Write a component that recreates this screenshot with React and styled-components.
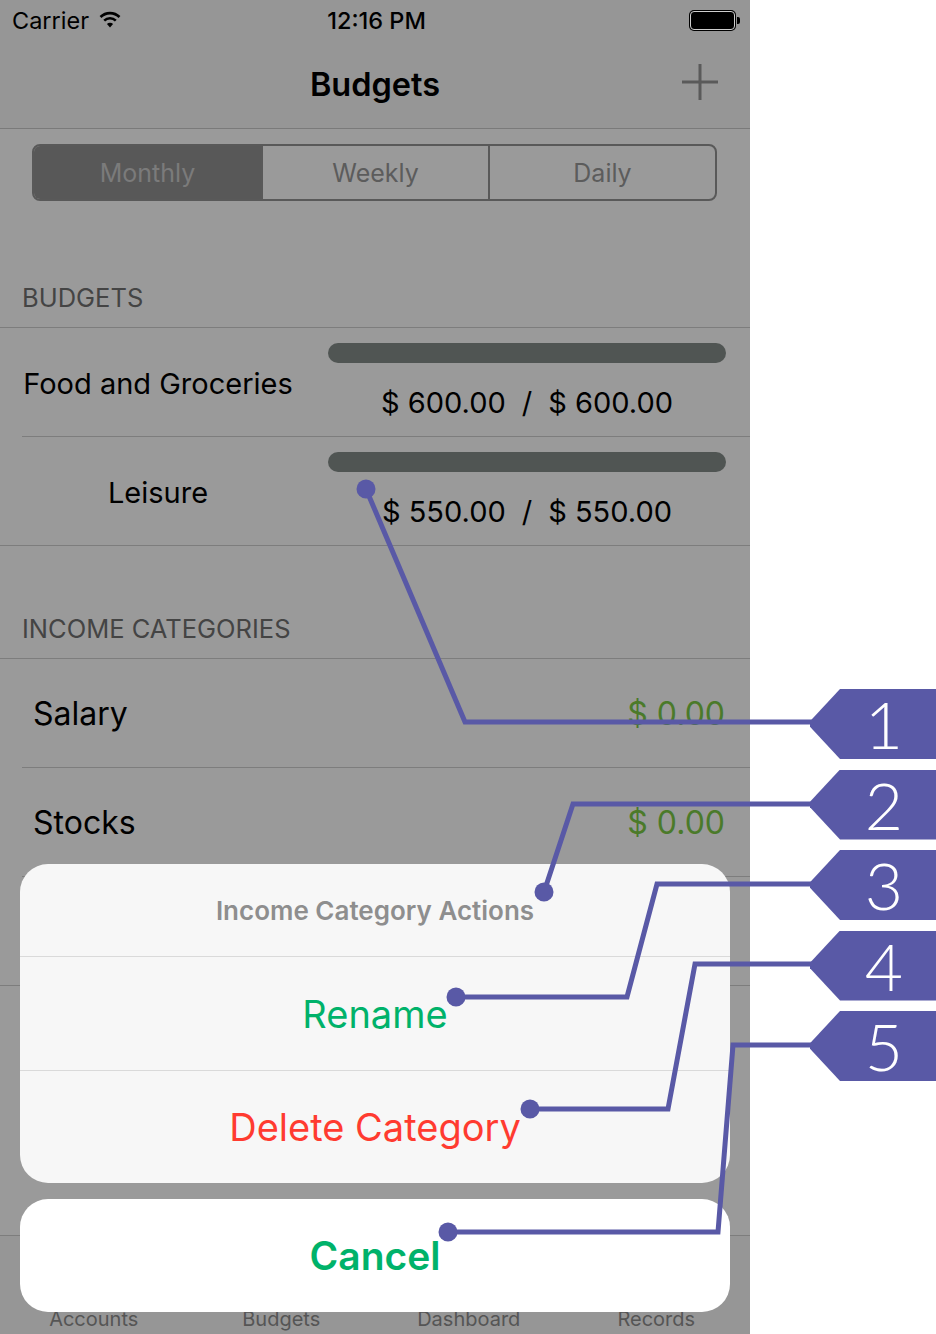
import React from 'react';
import styled, { createGlobalStyle } from 'styled-components';

const GlobalStyle = createGlobalStyle`
  html, body {
    margin: 0;
    padding: 0;
    background: #ffffff;
  }
  body {
    font-family: Inter, Roboto, "Liberation Sans", sans-serif;
  }
`;

const INK = '#5959a6'; // annotation colour

const segments = ['Monthly', 'Weekly', 'Daily'];

const budgets = [
  { name: 'Food and Groceries', spent: '$ 600.00', limit: '$ 600.00' },
  { name: 'Leisure', spent: '$ 550.00', limit: '$ 550.00' },
];

const incomes = [
  { name: 'Salary', amount: '$ 0.00' },
  { name: 'Stocks', amount: '$ 0.00' },
  { name: '', amount: '' },
];

const tabs = ['Accounts', 'Budgets', 'Dashboard', 'Records'];

// leader lines: dot -> bends -> tag tip
const leaders = [
  { dot: [366, 489], pts: [[366, 489], [465, 722], [814, 722]] },
  { dot: [544, 892], pts: [[544, 892], [573, 804], [814, 804]] },
  { dot: [456, 997], pts: [[456, 997], [627, 997], [657, 884], [814, 884]] },
  { dot: [530, 1109], pts: [[530, 1109], [668, 1109], [695, 964], [814, 964]] },
  { dot: [448, 1232], pts: [[448, 1232], [718, 1232], [733, 1045], [814, 1045]] },
];

export default function App() {
  return (
    <>
      <GlobalStyle />
      <Page>
        <Phone>
          <StatusBar>
            <Carrier>
              Carrier
              <svg width="24" height="18" viewBox="0 0 24 18">
                <path d="M2.5 7 A13.5 13.5 0 0 1 21.5 7" stroke="#000" strokeWidth="2.6" fill="none" />
                <path d="M6.2 10.6 A8.4 8.4 0 0 1 17.8 10.6" stroke="#000" strokeWidth="2.6" fill="none" />
                <path d="M12 17.5 L8.9 14 A4.4 4.4 0 0 1 15.1 14 Z" fill="#000" />
              </svg>
            </Carrier>
            <Clock>12:16 PM</Clock>
            <Battery><BatteryTip /></Battery>
          </StatusBar>

          <NavBar>
            <Title>Budgets</Title>
            <PlusButton aria-label="add">
              <svg width="36" height="36" viewBox="0 0 36 36">
                <path d="M18 0 V36 M0 18 H36" stroke="#5a5a5a" strokeWidth="3" />
              </svg>
            </PlusButton>
          </NavBar>

          <SegmentWrap>
            <Segmented>
              {segments.map((s, i) => (
                <Segment key={s} $active={i === 0}>{s}</Segment>
              ))}
            </Segmented>
          </SegmentWrap>

          <SectionHeader $height={126}>BUDGETS</SectionHeader>
          <Divider />
          {budgets.map((b, i) => (
            <React.Fragment key={b.name}>
              <BudgetRow>
                <BudgetName>{b.name}</BudgetName>
                <BudgetRight>
                  <Progress />
                  <Amounts>
                    <span>{b.spent}</span>
                    <span>/</span>
                    <span>{b.limit}</span>
                  </Amounts>
                </BudgetRight>
              </BudgetRow>
              <Divider $inset={i < budgets.length - 1} />
            </React.Fragment>
          ))}

          <SectionHeader $height={112}>INCOME CATEGORIES</SectionHeader>
          <Divider />
          {incomes.map((c, i) => (
            <React.Fragment key={i}>
              <IncomeRow>
                <IncomeName>{c.name}</IncomeName>
                <IncomeAmount>{c.amount}</IncomeAmount>
              </IncomeRow>
              <Divider $inset={i < incomes.length - 1} />
            </React.Fragment>
          ))}

          <TabBar>
            {tabs.map(t => (
              <TabLabel key={t}>{t}</TabLabel>
            ))}
          </TabBar>

          <Sheet>
            <SheetGroup>
              <SheetTitle>Income Category Actions</SheetTitle>
              <SheetAction $color="#00b26a" $h={114}>Rename</SheetAction>
              <SheetAction $color="#ff3b30" $h={112} $last>Delete Category</SheetAction>
            </SheetGroup>
            <CancelButton>Cancel</CancelButton>
          </Sheet>
        </Phone>

        <Callouts>
          {leaders.map((_, i) => (
            <Tag key={i}>{i + 1}</Tag>
          ))}
        </Callouts>

        <Leaders width="936" height="1334" viewBox="0 0 936 1334">
          {leaders.map((l, i) => (
            <g key={i}>
              <polyline
                points={l.pts.map(p => p.join(',')).join(' ')}
                fill="none"
                stroke={INK}
                strokeWidth="5"
                strokeLinejoin="miter"
              />
              <circle cx={l.dot[0]} cy={l.dot[1]} r="9.5" fill={INK} />
            </g>
          ))}
        </Leaders>
      </Page>
    </>
  );
}

const Page = styled.div`
  position: relative;
  display: flex;
  width: 936px;
  height: 1334px;
  overflow: hidden;
  background: #ffffff;
`;

const Phone = styled.div`
  position: relative;
  display: flex;
  flex-direction: column;
  width: 750px;
  height: 1334px;
  background: #9a9a9a;
  color: #000;
`;

const StatusBar = styled.div`
  display: grid;
  grid-template-columns: 1fr auto 1fr;
  align-items: center;
  height: 40px;
  padding: 0 11px 0 12px;
  background: #969696;
`;

const Carrier = styled.div`
  display: flex;
  align-items: center;
  gap: 9px;
  font-size: 23.5px;
  svg { margin-top: -2px; }
`;

const Clock = styled.div`
  font-size: 23.5px;
  font-weight: 500;
  padding-left: 2px;
`;

const Battery = styled.div`
  justify-self: end;
  position: relative;
  width: 43px;
  height: 17px;
  margin-right: 4px;
  background: #000;
  border: 1px solid #cfcfcf;
  border-radius: 4px;
  box-shadow: 0 0 0 1px #000;
`;

const BatteryTip = styled.span`
  position: absolute;
  right: -6px;
  top: 5px;
  width: 3px;
  height: 7px;
  background: #000;
  border-radius: 0 2px 2px 0;
`;

const NavBar = styled.div`
  display: flex;
  align-items: center;
  justify-content: center;
  position: relative;
  height: 88px;
  background: #969696;
  border-bottom: 1px solid #7a7a7a;
`;

const Title = styled.h1`
  margin: 0;
  font-size: 32.5px;
  font-weight: 600;
`;

const PlusButton = styled.div`
  position: absolute;
  right: 32px;
  top: 24px;
  width: 36px;
  height: 36px;
`;

const SegmentWrap = styled.div`
  padding: 15px 33px 0 32px;
`;

const Segmented = styled.div`
  display: grid;
  grid-template-columns: repeat(3, 1fr);
  height: 57px;
  box-sizing: border-box;
  border: 2px solid #595959;
  border-radius: 8px;
  overflow: hidden;
`;

const Segment = styled.div`
  display: flex;
  align-items: center;
  justify-content: center;
  font-size: 25px;
  color: ${p => (p.$active ? '#7b7b7b' : '#5c5c5c')};
  background: ${p => (p.$active ? '#585858' : 'transparent')};
  & + & { border-left: 2px solid #595959; }
`;

const SectionHeader = styled.div`
  display: flex;
  align-items: flex-end;
  height: ${p => p.$height}px;
  box-sizing: border-box;
  padding: 0 22px 15px;
  font-size: 25.5px;
  line-height: 28px;
  color: #444;
`;

const Divider = styled.div`
  height: 1px;
  margin-left: ${p => (p.$inset ? '22px' : '0')};
  background: #7d7d7d;
`;

const BudgetRow = styled.div`
  display: flex;
  height: 108px;
`;

const BudgetName = styled.div`
  display: flex;
  align-items: center;
  justify-content: center;
  width: 316px;
  padding-top: 2px;
  font-size: 29px;
`;

const BudgetRight = styled.div`
  display: flex;
  flex-direction: column;
  align-items: center;
  width: 398px;
  margin-left: 12px;
  padding-top: 15px;
`;

const Progress = styled.div`
  width: 100%;
  height: 20px;
  border-radius: 10px;
  background: #505553;
`;

const Amounts = styled.div`
  display: flex;
  gap: 16px;
  margin-top: 22px;
  font-size: 29px;
`;

const IncomeRow = styled.div`
  display: flex;
  align-items: center;
  justify-content: space-between;
  height: 108px;
  padding: 0 25px 0 33px;
`;

const IncomeName = styled.div`
  font-size: 32px;
`;

const IncomeAmount = styled.div`
  font-size: 32px;
  color: #4b7a2a;
`;

const TabBar = styled.div`
  display: grid;
  grid-template-columns: repeat(4, 1fr);
  align-items: end;
  margin-top: auto;
  height: 98px;
  border-top: 1px solid #7d7d7d;
  background: #969696;
`;

const TabLabel = styled.div`
  text-align: center;
  font-size: 20px;
  color: #555;
  padding-bottom: 3px;
`;

const Sheet = styled.div`
  position: absolute;
  left: 20px;
  right: 20px;
  top: 864px;
  display: flex;
  flex-direction: column;
  gap: 16px;
`;

const SheetGroup = styled.div`
  display: flex;
  flex-direction: column;
  border-radius: 28px;
  background: #f7f7f7;
  overflow: hidden;
`;

const SheetTitle = styled.div`
  display: flex;
  align-items: center;
  justify-content: center;
  height: 92px;
  border-bottom: 1px solid #dadada;
  font-size: 26px;
  font-weight: 600;
  color: #8e8e8e;
`;

const SheetAction = styled.div`
  display: flex;
  align-items: center;
  justify-content: center;
  height: ${p => p.$h}px;
  box-sizing: border-box;
  border-bottom: ${p => (p.$last ? 'none' : '1px solid #dadada')};
  font-size: 38px;
  color: ${p => p.$color};
`;

const CancelButton = styled.div`
  display: flex;
  align-items: center;
  justify-content: center;
  height: 113px;
  border-radius: 28px;
  background: #ffffff;
  font-size: 39px;
  font-weight: 600;
  color: #00b26a;
`;

const Callouts = styled.div`
  display: flex;
  flex-direction: column;
  align-items: flex-end;
  gap: 10.5px;
  flex: 1;
  padding-top: 689px;
`;

const Tag = styled.div`
  display: flex;
  align-items: center;
  justify-content: center;
  width: 126px;
  height: 70px;
  padding-left: 22px;
  box-sizing: border-box;
  background: ${INK};
  clip-path: polygon(30px 0, 100% 0, 100% 100%, 30px 100%, 0 54%, 0 46%);
  font-family: Lato, "Noto Sans", sans-serif;
  font-weight: 300;
  font-size: 66px;
  line-height: 1;
  color: #ffffff;
`;

const Leaders = styled.svg`
  position: absolute;
  left: 0;
  top: 0;
  pointer-events: none;
`;
